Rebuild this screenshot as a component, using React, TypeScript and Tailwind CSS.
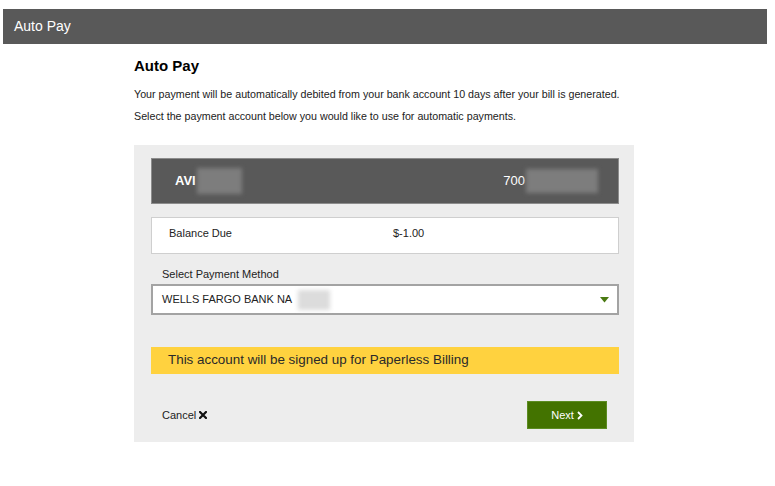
import React from "react";

export default function App() {
  return (
    <div className="w-[775px] h-[486px] bg-white overflow-hidden" style={{ fontFamily: '"Liberation Sans", Arial, sans-serif' }}>
      <div className="mt-[9px] ml-[3px] w-[764px] h-[35px] bg-[#595959] flex items-center pl-[11px] text-white text-[14px]">
        Auto Pay
      </div>
      <div className="ml-[134px] w-[500px] flex flex-col">
        <div className="mt-[13px] text-[15px] leading-[18px] font-bold text-black">Auto Pay</div>
        <p className="mt-[12px] text-[10.7px] leading-[14px] text-[#222]">
          Your payment will be automatically debited from your bank account 10 days after your bill is generated.
        </p>
        <p className="mt-[8px] text-[10.7px] leading-[14px] text-[#222]">
          Select the payment account below you would like to use for automatic payments.
        </p>
        <div className="mt-[22px] bg-[#ededed] pt-[13px] pl-[17px] pr-[15px] pb-[13px] flex flex-col">
          <div className="h-[46px] bg-[#595959] border border-[#8c8c8c] flex items-center pl-[23px] pr-[20px] text-white text-[13px]">
            <div className="flex items-center flex-1">
              <span className="font-bold">AVI</span>
              <div className="ml-[1px] w-[45px] h-[26px] bg-[#7d7d7d] blur-[2px]" />
            </div>
            <div className="flex items-center">
              <span>700</span>
              <div className="ml-[1px] w-[72px] h-[24px] bg-[#7d7d7d] blur-[2px]" />
            </div>
          </div>
          <div className="mt-[13px] h-[37px] bg-white border border-[#cfcfcf] flex pt-[8px] pl-[17px] text-[11px] leading-[14px] text-[#222]">
            <span className="w-[224px]">Balance Due</span>
            <span>$-1.00</span>
          </div>
          <div className="mt-[13px] pl-[11px] text-[11px] leading-[14px] text-[#222]">Select Payment Method</div>
          <div className="mt-[3px] h-[31px] bg-white border-2 border-[#a3a3a3] flex items-center pl-[9px] pr-[8px] text-[11px] text-[#222]">
            <span>WELLS FARGO BANK NA</span>
            <div className="ml-[6px] w-[32px] h-[20px] bg-[#dcdcdc] blur-[2px]" />
            <div className="flex-1" />
            <svg width="9" height="6" viewBox="0 0 9 6"><path d="M0 0 L9 0 L4.5 5.5 Z" fill="#4a7a12" /></svg>
          </div>
          <div className="mt-[32px] h-[27px] bg-[#ffd23f] flex items-center pl-[17px] text-[13.4px] text-[#2a2a2a]">
            This account will be signed up for Paperless Billing
          </div>
          <div className="mt-[27px] flex items-center">
            <div className="pl-[11px] flex items-center text-[11px] text-[#222]">
              <span>Cancel</span>
              <svg className="ml-[3px]" width="8" height="8" viewBox="0 0 8 8"><path d="M1 1 L7 7 M7 1 L1 7" stroke="#111" strokeWidth="2.2" strokeLinecap="square" /></svg>
            </div>
            <div className="flex-1" />
            <div className="mr-[12px] w-[80px] h-[28px] bg-[#437300] border border-[#5c8c22] flex items-center justify-center text-white text-[11px]">
              <span>Next</span>
              <svg className="ml-[3px]" width="6" height="9" viewBox="0 0 6 9"><path d="M1 1 L4.5 4.5 L1 8" stroke="#fff" strokeWidth="1.8" fill="none" /></svg>
            </div>
          </div>
        </div>
      </div>
    </div>
  );
}
